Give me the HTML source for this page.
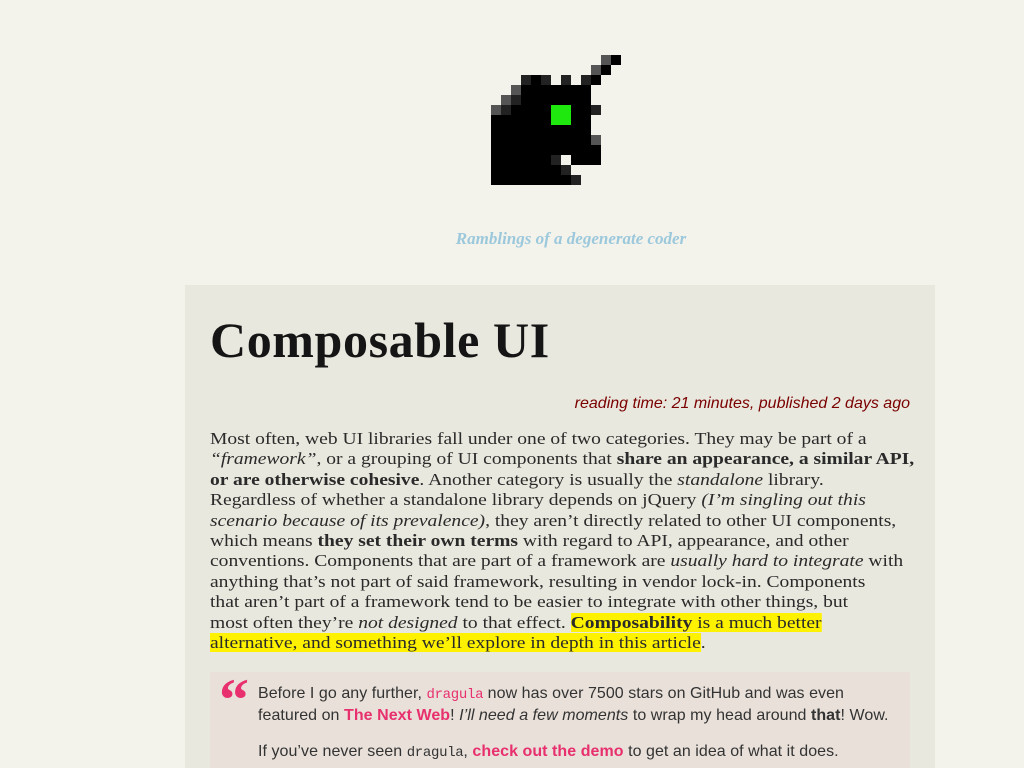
<!DOCTYPE html>
<html><head><meta charset="utf-8"><style>
html,body{margin:0;padding:0;background:#f3f3ec;width:1024px;height:768px;overflow:hidden;position:relative}
.tag{position:absolute;left:0;width:1142px;top:229px;text-align:center;font:italic bold 17px "Liberation Serif",serif;color:#9cc8dc}
.card{position:absolute;left:185px;top:285px;width:750px;height:483px;background:#e9e8de;overflow:hidden}
h1{position:absolute;left:25px;top:26px;margin:0;font:bold 50px "Liberation Serif",serif;color:#151515;letter-spacing:0.6px}
.rt{position:absolute;right:25px;top:110px;font:italic 16px "Liberation Sans",sans-serif;color:#7a0000;letter-spacing:0}
.p{position:absolute;left:25px;top:144px;font:17px/20.4px "Liberation Serif",serif;color:#2a2a2a;white-space:nowrap;transform:scaleX(1.15);transform-origin:0 0}
.hl{background:#fff200}
.q{position:absolute;left:25px;top:387px;width:700px;height:120px;background:#e8e0d9;font:16px/22px "Liberation Sans",sans-serif;color:#333;letter-spacing:0.05px}
.q .t{position:absolute;left:48px;top:11px;white-space:nowrap}
.q .m{position:absolute;left:9px;top:-6px;font:bold 60px "Liberation Serif",serif;color:#e8306e}
a{color:#e8306e;font-weight:bold;text-decoration:none}
code{font:14px "Liberation Mono",monospace;letter-spacing:-0.3px}
code.c{color:#e8306e}
</style></head><body>
<svg style="position:absolute;left:0;top:0" width="1024" height="200">
<g fill="#000">
<rect x="611" y="55" width="10" height="10"/><rect x="601" y="65" width="10" height="10"/>
<rect x="531" y="75" width="10" height="10"/><rect x="591" y="75" width="10" height="10"/>
<rect x="521" y="85" width="70" height="10"/><rect x="511" y="95" width="80" height="10"/>
<rect x="511" y="105" width="80" height="10"/><rect x="491" y="115" width="100" height="30"/>
<rect x="491" y="145" width="110" height="10"/><rect x="491" y="155" width="60" height="10"/>
<rect x="571" y="155" width="30" height="10"/><rect x="491" y="165" width="70" height="10"/>
<rect x="491" y="175" width="80" height="10"/></g>
<g fill="#555"><rect x="601" y="55" width="10" height="10"/><rect x="591" y="65" width="10" height="10"/>
<rect x="511" y="85" width="10" height="10"/><rect x="501" y="95" width="10" height="10"/><rect x="491" y="105" width="10" height="10"/><rect x="591" y="135" width="10" height="10"/></g>
<g fill="#222"><rect x="521" y="75" width="10" height="10"/><rect x="541" y="75" width="10" height="10"/><rect x="561" y="75" width="10" height="10"/><rect x="581" y="75" width="10" height="10"/>
<rect x="511" y="95" width="10" height="10"/><rect x="501" y="105" width="10" height="10"/><rect x="591" y="105" width="10" height="10"/>
<rect x="551" y="155" width="10" height="10"/><rect x="561" y="165" width="10" height="10"/><rect x="571" y="175" width="10" height="10"/></g>
<rect x="551" y="105" width="20" height="20" fill="#1fe80e"/>
</svg>
<div class="tag">Ramblings of a degenerate coder</div>
<div class="card">
<h1>Composable UI</h1>
<div class="rt">reading time: 21 minutes, published 2 days ago</div>
<div class="p">Most often, web UI libraries fall under one of two categories. They may be part of a<br>
<i>“framework”</i>, or a grouping of UI components that <b>share an appearance, a similar API,</b><br>
<b>or are otherwise cohesive</b>. Another category is usually the <i>standalone</i> library.<br>
Regardless of whether a standalone library depends on jQuery <i>(I’m singling out this</i><br>
<i>scenario because of its prevalence)</i>, they aren’t directly related to other UI components,<br>
which means <b>they set their own terms</b> with regard to API, appearance, and other<br>
conventions. Components that are part of a framework are <i>usually hard to integrate</i> with<br>
anything that’s not part of said framework, resulting in vendor lock-in. Components<br>
that aren’t part of a framework tend to be easier to integrate with other things, but<br>
most often they’re <i>not designed</i> to that effect. <span class="hl"><b>Composability</b> is a much better</span><br>
<span class="hl">alternative, and something we’ll explore in depth in this article</span>.</div>
<div class="q"><div class="m">“</div><div class="t">Before I go any further, <code class="c">dragula</code> now has over 7500 stars on GitHub and was even<br>
featured on <a>The Next Web</a>! <i>I’ll need a few moments</i> to wrap my head around <b>that</b>! Wow.<br>
<div style="height:14px"></div>If you’ve never seen <code>dragula</code>, <a>check out the demo</a> to get an idea of what it does.</div></div>
</div>
</body></html>
